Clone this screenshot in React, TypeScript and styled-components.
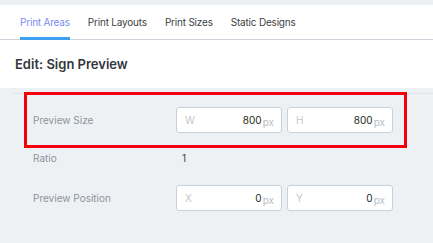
import React from "react";
import styled, { createGlobalStyle } from "styled-components";

const GlobalStyle = createGlobalStyle`
	html, body {
		margin: 0;
		padding: 0;
		background: #eef1f4;
		font-family: "Inter", "Noto Sans", sans-serif;
	}
`;

const tabs = ["Print Areas", "Print Layouts", "Print Sizes", "Static Designs"];

interface FieldProps {
	letter: string
	value: string
}

const Field: React.FC<FieldProps> = ({ letter, value }) => {
	return (
		<InputBox>
			<Letter>{letter}</Letter>
			<Value>{value}</Value>
			<Unit>px</Unit>
		</InputBox>
	);
};

export default function App() {
	return (
		<>
			<GlobalStyle />
			<Page>
				<Header>
					<Tabs>
						{tabs.map((t, i) => (
							<Tab key={t} active={i === 0}>{t}</Tab>
						))}
					</Tabs>
					<TitleRow>
						<Title>Edit: Sign Preview</Title>
					</TitleRow>
				</Header>
				<Form>
					<Row highlighted>
						<Label>Preview Size</Label>
						<Inputs>
							<Field letter="W" value="800" />
							<Field letter="H" value="800" />
						</Inputs>
					</Row>
					<TextRow>
						<Label>Ratio</Label>
						<Plain>1</Plain>
					</TextRow>
					<Row>
						<Label>Preview Position</Label>
						<Inputs>
							<Field letter="X" value="0" />
							<Field letter="Y" value="0" />
						</Inputs>
					</Row>
				</Form>
			</Page>
		</>
	);
}

const Page = styled.div`
	display: flex;
	flex-direction: column;
	padding-top: 5px;
	min-height: 238px;
`;

const Header = styled.div`
	background: #fff;
`;

const Tabs = styled.div`
	display: flex;
	padding-left: 20px;
	height: 34px;
	border-bottom: 1px solid #cdd5de;
`;

const Tab = styled.div<{ active?: boolean }>`
	display: flex;
	align-items: center;
	box-sizing: border-box;
	height: 35px;
	margin-right: 18px;
	padding-top: 1px;
	font-size: 10px;
	letter-spacing: -0.2px;
	color: ${(p) => (p.active ? "#7b8cf7" : "#3a3f45")};
	border-bottom: 3px solid ${(p) => (p.active ? "#3fa0f2" : "transparent")};
`;

const TitleRow = styled.div`
	display: flex;
	align-items: center;
	height: 48px;
	padding-left: 15px;
`;

const Title = styled.h1`
	margin: 0;
	font-size: 13px;
	font-weight: 600;
	color: #33363b;
`;

const Form = styled.div`
	display: flex;
	flex-direction: column;
	margin: 5px 0 0 13px;
	border-top: 1px solid #e1e5ea;
`;

const Row = styled.div<{ highlighted?: boolean }>`
	display: flex;
	align-items: center;
	box-sizing: border-box;
	width: 383px;
	margin-left: 11px;
	margin-top: ${(p) => (p.highlighted ? "-2px" : "0")};
	padding: 12px 0 12px 6px;
	border: 3px solid ${(p) => (p.highlighted ? "#f2000c" : "transparent")};
`;

const TextRow = styled.div`
	display: flex;
	align-items: center;
	height: 20px;
	margin-left: 20px;
	margin-bottom: 2px;
`;

const Label = styled.div`
	width: 143px;
	font-size: 10px;
	color: #8d939b;
`;

const Plain = styled.div`
	font-size: 10px;
	color: #444;
	padding-left: 6px;
`;

const Inputs = styled.div`
	display: flex;
	gap: 5px;
`;

const InputBox = styled.div`
	display: flex;
	align-items: baseline;
	box-sizing: border-box;
	width: 106px;
	height: 26px;
	padding: 0 7px 0 8px;
	background: #fff;
	border: 1px solid #c7d0dc;
	border-radius: 3px;
	line-height: 24px;
`;

const Letter = styled.span`
	flex: 1;
	font-size: 10px;
	color: #c3c7cc;
`;

const Value = styled.span`
	font-size: 10px;
	color: #1d1f22;
`;

const Unit = styled.span`
	font-size: 10px;
	color: #b8bdc3;
	position: relative;
	top: 2px;
	margin-left: 1px;
`;
